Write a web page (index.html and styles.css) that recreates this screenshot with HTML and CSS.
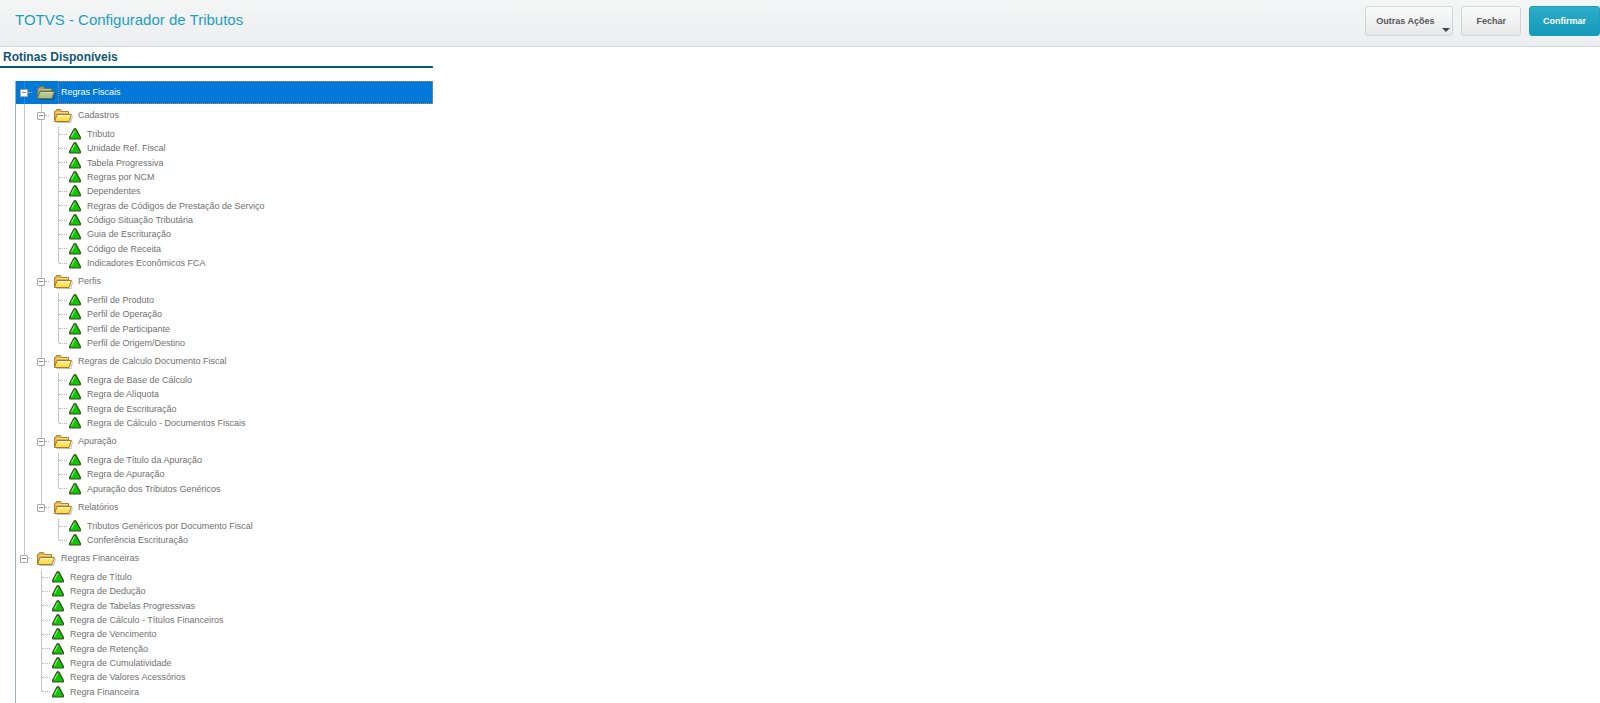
FILE: index.html
```
<!DOCTYPE html>
<html lang="pt-BR">
<head>
    <meta charset="UTF-8">
    <meta name="viewport" content="width=device-width, initial-scale=1.0">
    <title>TOTVS - Configurador de Tributos</title>
    <link rel="stylesheet" href="styles.css">
</head>
<body>

    <!-- Shared icons -->
    <svg class="sprite" aria-hidden="true">
        <defs>
            <linearGradient id="folderFront" x1="0" y1="0" x2="0" y2="1">
                <stop offset="0" stop-color="#fff08a"/>
                <stop offset="1" stop-color="#fbd63c"/>
            </linearGradient>
        </defs>
        <symbol id="folder" viewBox="0 0 20 15">
            <path d="M3 14h14l2.500-7 .5 1-2 7H4z" fill="#000" opacity=".25"/>
            <path d="M1.500 12.500V3.500L3 3 3.500 1.500h4l1 2H15.500v9z" fill="#e2b04a" stroke="#b5822c"/>
            <path d="M2.500 4.500h12.500" stroke="#f4d68c"/>
            <path d="M1.500 13.500L4 6.500h14.500l-2.500 7z" fill="url(#folderFront)" stroke="#a8782a"/>
            <path d="M4.800 7.500h12" stroke="#fffbd0"/>
        </symbol>
        <symbol id="triangle" viewBox="0 0 12 12">
            <path d="M5 1.200Q6 .2 7 1.200L11.200 9Q11.800 11 10.500 11h-9Q.2 11 .8 9z" fill="#0cc800" stroke="#3d4420" stroke-width="1.200"/>
            <path d="M5.700 2.500L2.500 8.500" stroke="#7df06c" stroke-width="1.200"/>
        </symbol>
    </svg>

    <header class="topbar">
        <h1>TOTVS - Configurador de Tributos</h1>
        <div class="buttons">
            <button class="button button-menu">Outras Ações</button>
            <button class="button">Fechar</button>
            <button class="button button-primary">Confirmar</button>
        </div>
    </header>

    <main class="panel">
        <h2>Rotinas Disponíveis</h2>
        <ul class="tree" id="tree"></ul>
    </main>

    <script src="script.js"></script>

</body>
</html>
```
FILE: styles.css
```
body {
    margin: 0;
    background-color: #fff;
    color: #707070;
    font-family: "Liberation Sans", Arial, sans-serif;
    font-size: 9px;
    height: 100vh;
    display: flex;
    flex-direction: column;
    overflow: hidden;
}
.sprite {
    position: absolute;
    width: 0;
    height: 0;
}
.topbar {
    display: flex;
    justify-content: space-between;
    align-items: flex-start;
    box-sizing: border-box;
    height: 47px;
    padding: 6px 0 0 15px;
    border-bottom: 1px solid #d5d7d9;
    background: linear-gradient(#f4f5f5, #edeef0);
}
h1 {
    margin: 0;
    color: #1b9fc2;
    font-size: 15px;
    font-weight: normal;
    line-height: 28px;
}
.buttons {
    display: flex;
    gap: 8px;
}
.button {
    box-sizing: border-box;
    height: 30px;
    padding: 0 14px;
    border: 1px solid #d4d4d4;
    border-radius: 3px;
    background: linear-gradient(#fbfbfb, #e8e8e8);
    color: #55575c;
    font-family: inherit;
    font-size: 9px;
    font-weight: bold;
    cursor: pointer;
}
.button-menu {
    display: flex;
    align-items: center;
    gap: 8px;
    padding: 0 2px 0 10px;
}
.button-menu::after {
    content: "";
    align-self: flex-end;
    margin-bottom: 3px;
    border: 4px solid transparent;
    border-top-color: #44464c;
    border-bottom: 0;
}
.button-primary {
    padding: 0 13px;
    border-color: #1c9fbe;
    background: linear-gradient(#2eaccb, #1399b9);
    color: #fff;
}
.panel {
    display: flex;
    flex-direction: column;
    flex: 1;
    min-height: 0;
    width: calc(27% + 1px);
}
h2 {
    margin: 0;
    padding: 2px 3px 0;
    border-bottom: 2px solid #0d5775;
    color: #0d5775;
    font-size: 12px;
    line-height: 17px;
}
ul {
    margin: 0;
    padding: 0;
    list-style: none;
}
.tree {
    flex: 1;
    margin: 13px 0 0 15px;
    border-left: 1px solid #8fb0ec;
}
.tree ul {
    margin-left: 17px;
}

/* dotted guide lines */
.node,
.leaf {
    background: repeating-linear-gradient(#b4b4b4 0 1px, #dcdcdc 1px 2px) 8px 0 / 1px 100% no-repeat;
}
.node:last-child {
    background-size: 1px 12px;
}
.leaf:last-child {
    background-size: 1px 7px;
}
.row {
    display: flex;
    align-items: center;
    height: 23px;
}
.toggle {
    box-sizing: border-box;
    width: 8px;
    height: 8px;
    margin-left: 4px;
    padding: 0;
    border: 1px solid #a8a8a8;
    border-radius: 1px;
    background: linear-gradient(#888, #888) center / 4px 1px no-repeat #fff;
}
.toggle.closed {
    background: linear-gradient(#888, #888) center / 4px 1px no-repeat, linear-gradient(#888, #888) center / 1px 4px no-repeat #fff;
}
.row::before,
.leaf::before {
    content: "";
    order: 1;
    width: 4px;
    border-top: 1px dotted #b4b4b4;
}
.folder {
    order: 2;
    width: 20px;
    height: 15px;
    margin-left: 4px;
}
.row a {
    order: 3;
    flex: 1;
    padding-left: 5px;
    line-height: 21px;
}
.leaf {
    display: flex;
    align-items: center;
    height: 14px;
}
/* keeps the average row pitch a bit over 14px */
.leaf:nth-child(3n) {
    height: 15px;
}
.leaf::before {
    order: 0;
    width: 8px;
    margin-left: 9px;
}
.triangle {
    width: 12px;
    height: 12px;
    margin-left: 2px;
}
.leaf a {
    padding-left: 6px;
}
.tree a {
    color: inherit;
    text-decoration: none;
    white-space: nowrap;
}
.selected {
    box-sizing: border-box;
    background: repeating-linear-gradient(#4f93cc 0 1px, #0078d7 1px 2px) 8px 0 / 1px 100% no-repeat #0078d7;
    color: #fff;
}
.selected a {
    border: 1px dotted #c08a5a;
    margin-left: 2px;
    padding-left: 2px;
}
.selected .folder {
    filter: saturate(.5) hue-rotate(25deg) brightness(.85);
}
```
FILE: script.js
```
const routines = [
    { name: 'Regras Fiscais', selected: true, items: [
        { name: 'Cadastros', items: [
            'Tributo', 'Unidade Ref. Fiscal', 'Tabela Progressiva', 'Regras por NCM', 'Dependentes',
            'Regras de Códigos de Prestação de Serviço', 'Código Situação Tributária',
            'Guia de Escrituração', 'Código de Receita', 'Indicadores Econômicos FCA'
        ] },
        { name: 'Perfis', items: [
            'Perfil de Produto', 'Perfil de Operação', 'Perfil de Participante', 'Perfil de Origem/Destino'
        ] },
        { name: 'Regras de Calculo Documento Fiscal', items: [
            'Regra de Base de Cálculo', 'Regra de Alíquota', 'Regra de Escrituração',
            'Regra de Cálculo - Documentos Fiscais'
        ] },
        { name: 'Apuração', items: [
            'Regra de Título da Apuração', 'Regra de Apuração', 'Apuração dos Tributos Genéricos'
        ] },
        { name: 'Relatórios', items: [
            'Tributos Genéricos por Documento Fiscal', 'Conferência Escrituração'
        ] }
    ] },
    { name: 'Regras Financeiras', items: [
        'Regra de Título', 'Regra de Dedução', 'Regra de Tabelas Progressivas',
        'Regra de Cálculo - Títulos Financeiros', 'Regra de Vencimento', 'Regra de Retenção',
        'Regra de Cumulatividade', 'Regra de Valores Acessórios', 'Regra Financeira'
    ] }
];

function renderItem(item) {
    if (typeof item === 'string') {
        return `<li class="leaf"><svg class="triangle" aria-hidden="true"><use href="#triangle"/></svg><a href="#">${item}</a></li>`;
    }
    return `<li class="node">
        <div class="row${item.selected ? ' selected' : ''}">
            <button class="toggle" aria-label="${item.name}" aria-expanded="true"></button>
            <svg class="folder" aria-hidden="true"><use href="#folder"/></svg>
            <a href="#">${item.name}</a>
        </div>
        <ul>${item.items.map(renderItem).join('')}</ul>
    </li>`;
}

const tree = document.getElementById('tree');
tree.innerHTML = routines.map(renderItem).join('');

// Open and close a folder
tree.addEventListener('click', function(e) {
    if (!e.target.classList.contains('toggle')) return;
    const list = e.target.closest('.node').querySelector('ul');
    list.hidden = !list.hidden;
    e.target.classList.toggle('closed', list.hidden);
    e.target.setAttribute('aria-expanded', !list.hidden);
});
```
